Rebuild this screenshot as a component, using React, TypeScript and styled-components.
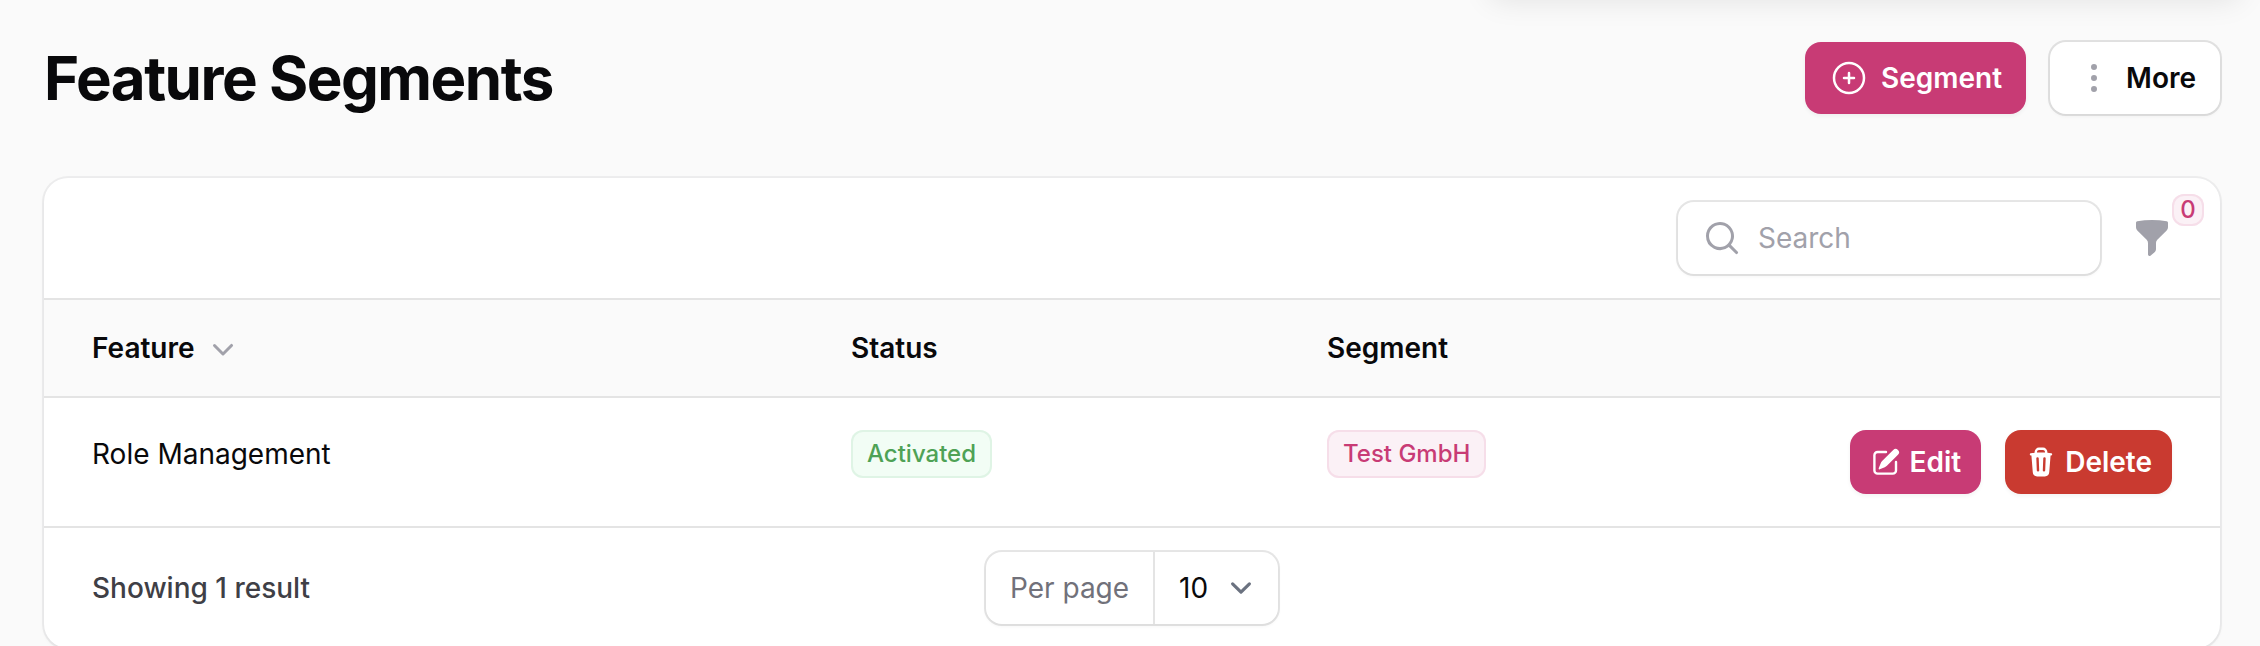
import React from "react";
import styled, { createGlobalStyle } from "styled-components";
import {
  HiMiniChevronDown,
  HiMiniEllipsisVertical,
  HiMiniFunnel,
  HiMiniMagnifyingGlass,
  HiMiniPencilSquare,
  HiMiniTrash,
  HiOutlinePlusCircle,
} from "react-icons/hi2";

const GlobalStyle = createGlobalStyle`
  *, *::before, *::after { box-sizing: border-box; }
  html, body { margin: 0; background: #fafafa; overflow: hidden; }
  body, button, input {
    font-family: Inter, "Liberation Sans", sans-serif;
    -webkit-font-smoothing: antialiased;
  }
  svg { display: block; flex: none; }
`;

const Page = styled.div`
  position: relative;
  width: 2260px;
  height: 646px;
  padding: 42px 40px 0 44px;
  overflow: hidden;
  color: #09090b;
  font-size: 28px;
  line-height: 40px;
`;

/* Lower edge of the floating panel that sits above the visible area. */
const DropdownShadow = styled.div`
  position: absolute;
  top: -214px;
  left: 1484px;
  width: 762px;
  height: 200px;
  border-radius: 16px;
  box-shadow: 0 20px 30px -6px rgba(0, 0, 0, 0.1), 0 8px 12px -8px rgba(0, 0, 0, 0.1);
`;

const PageHeader = styled.header`
  display: flex;
  justify-content: space-between;
  align-items: center;
  height: 72px;
`;

const Title = styled.h1`
  margin: 0;
  font-size: 60px;
  line-height: 72px;
  font-weight: 700;
  letter-spacing: -0.025em;
`;

const Actions = styled.div`
  display: flex;
  gap: 24px;
`;

const tones = {
  primary: "background: #c83b75; color: #fff; box-shadow: 0 2px 4px rgba(0,0,0,0.05);",
  danger: "background: #c93a30; color: #fff; box-shadow: 0 2px 4px rgba(0,0,0,0.05);",
  plain:
    "background: #fff; color: #09090b; box-shadow: 0 0 0 2px rgba(9,9,11,0.1), 0 2px 4px rgba(0,0,0,0.05); svg { color: #a1a1aa; }",
};

const Button = styled.button<{ $tone: keyof typeof tones; $small?: boolean }>`
  display: inline-flex;
  align-items: center;
  gap: ${(p) => (p.$small ? 8 : 12)}px;
  height: ${(p) => (p.$small ? 64 : 72)}px;
  padding: 0 ${(p) => (p.$small ? 20 : 24)}px;
  border: 0;
  border-radius: 16px;
  font-size: 28px;
  line-height: 40px;
  font-weight: 600;
  ${(p) => tones[p.$tone]}
`;

const Card = styled.section`
  width: 2176px;
  height: 470px;
  margin-top: 64px;
  background: #fff;
  border-radius: 24px;
  box-shadow: 0 0 0 2px rgba(9, 9, 11, 0.05), 0 2px 4px rgba(0, 0, 0, 0.05);
`;

const Toolbar = styled.div`
  display: flex;
  justify-content: flex-end;
  align-items: center;
  gap: 32px;
  height: 120px;
  padding: 0 48px;
`;

const SearchField = styled.label`
  display: flex;
  align-items: center;
  gap: 16px;
  width: 422px;
  height: 72px;
  padding-left: 24px;
  border-radius: 16px;
  color: #a1a1aa;
  box-shadow: 0 0 0 2px rgba(9, 9, 11, 0.1), 0 2px 4px rgba(0, 0, 0, 0.05);
`;

const FilterButton = styled.div`
  position: relative;
  color: #a1a1aa;
`;

const Badge = styled.span<{ $tone: "success" | "primary" }>`
  display: inline-flex;
  align-items: center;
  justify-content: center;
  height: 48px;
  padding: 0 16px;
  border-radius: 12px;
  font-size: 24px;
  line-height: 32px;
  font-weight: 500;
  ${(p) =>
    p.$tone === "success"
      ? "color: #4ea255; background: #f2fdf5; box-shadow: inset 0 0 0 2px #dff4e5;"
      : "color: #c83b75; background: #fbf1f6; box-shadow: inset 0 0 0 2px #f6dee9;"}
`;

const CountBadge = styled(Badge)`
  position: absolute;
  left: 40px;
  top: -24px;
  width: 32px;
  height: 32px;
  padding: 0;
`;

const Row = styled.div<{ $head?: boolean }>`
  display: grid;
  grid-template-columns: 759px 476px 1fr auto;
  align-items: start;
  height: ${(p) => (p.$head ? 98 : 130)}px;
  padding: ${(p) => (p.$head ? 24 : 32)}px 48px 0;
  border-top: 2px solid #e4e4e4;
  line-height: 48px;
  ${(p) => p.$head && "background: #fafafa; font-weight: 600;"}
`;

const Sortable = styled.div`
  display: flex;
  align-items: center;
  gap: 8px;
  svg { color: #a1a1aa; }
`;

const BadgeCell = styled.div`
  display: flex;
`;

const Footer = styled.footer`
  display: grid;
  grid-template-columns: 1fr auto 1fr;
  align-items: center;
  height: 122px;
  padding: 0 48px;
  border-top: 2px solid #e4e4e4;
`;

const ResultCount = styled.span`
  color: #3f3f46;
  font-weight: 500;
`;

const PerPage = styled.div`
  display: flex;
  width: 292px;
  height: 72px;
  border-radius: 16px;
  box-shadow: 0 0 0 2px rgba(9, 9, 11, 0.1), 0 2px 4px rgba(0, 0, 0, 0.05);
`;

const PerPageLabel = styled.span`
  display: flex;
  align-items: center;
  width: 169px;
  padding-left: 24px;
  border-right: 2px solid #e4e4e4;
  color: #71717a;
`;

const PerPageValue = styled.span`
  display: flex;
  align-items: center;
  justify-content: space-between;
  flex: 1;
  padding: 0 16px 0 24px;
`;

const SelectArrow = () => (
  <svg width="42" height="42" viewBox="0 0 20 20" fill="none" stroke="#6b7280" strokeWidth="1.5" strokeLinecap="round" strokeLinejoin="round">
    <path d="M6 8l4 4 4-4" />
  </svg>
);

export default function App() {
  return (
    <>
      <GlobalStyle />
      <Page>
        <DropdownShadow />
        <PageHeader>
          <Title>Feature Segments</Title>
          <Actions>
            <Button $tone="primary"><HiOutlinePlusCircle size={40} />Segment</Button>
            <Button $tone="plain"><HiMiniEllipsisVertical size={40} />More</Button>
          </Actions>
        </PageHeader>
        <Card>
          <Toolbar>
            <SearchField><HiMiniMagnifyingGlass size={40} />Search</SearchField>
            <FilterButton>
              <HiMiniFunnel size={40} />
              <CountBadge $tone="primary">0</CountBadge>
            </FilterButton>
          </Toolbar>
          <Row $head>
            <Sortable>Feature<HiMiniChevronDown size={40} /></Sortable>
            <span>Status</span>
            <span>Segment</span>
          </Row>
          <Row>
            <span>Role Management</span>
            <BadgeCell><Badge $tone="success">Activated</Badge></BadgeCell>
            <BadgeCell><Badge $tone="primary">Test GmbH</Badge></BadgeCell>
            <Actions>
              <Button $tone="primary" $small><HiMiniPencilSquare size={32} />Edit</Button>
              <Button $tone="danger" $small><HiMiniTrash size={32} />Delete</Button>
            </Actions>
          </Row>
          <Footer>
            <ResultCount>Showing 1 result</ResultCount>
            <PerPage>
              <PerPageLabel>Per page</PerPageLabel>
              <PerPageValue>10<SelectArrow /></PerPageValue>
            </PerPage>
          </Footer>
        </Card>
      </Page>
    </>
  );
}
